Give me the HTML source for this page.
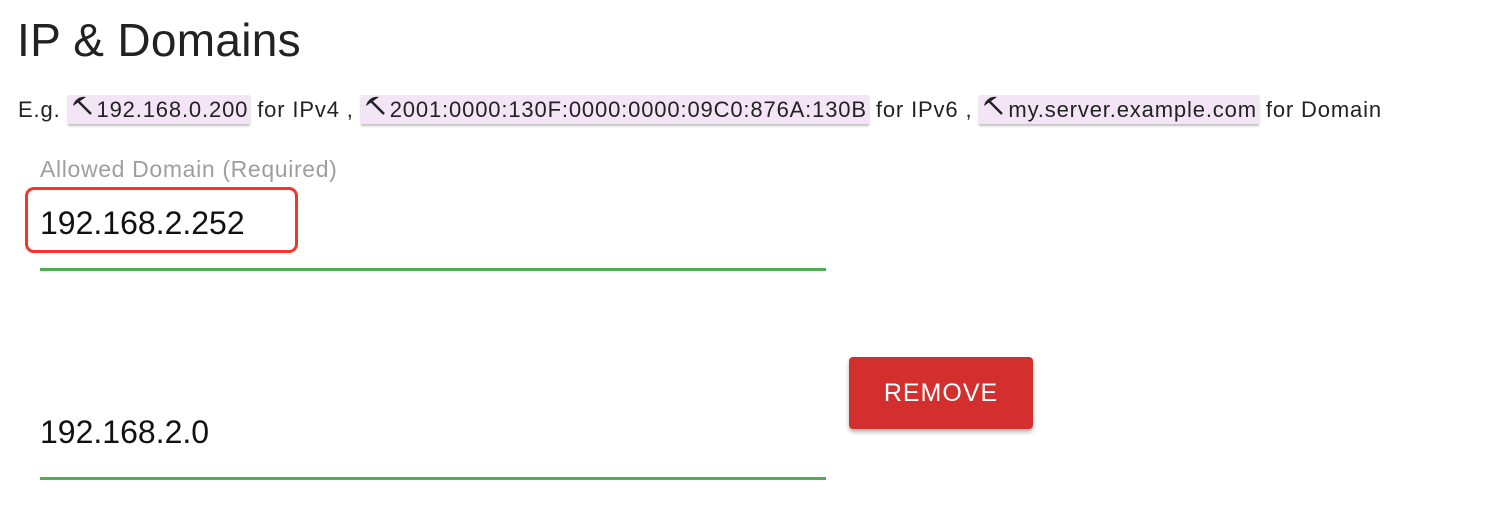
<!DOCTYPE html>
<html><head><style>
body{margin:0;width:1500px;height:528px;background:#fff;font-family:"Liberation Sans",sans-serif;color:#222;position:relative;overflow:hidden}
.a{position:absolute;white-space:nowrap}
.chip{background:#f3e5f5;box-shadow:0 2px 2px rgba(0,0,0,.25);padding:0 2px 0 2px;display:inline-block;line-height:28px}
.ic{display:inline-block;width:27px;height:22px;vertical-align:0px}
</style></head><body>
<div class="a" style="left:17px;top:13px;font-size:46px;color:#222;letter-spacing:0.3px">IP &amp; Domains</div>
<div class="a" style="left:18px;top:95px;font-size:22px;line-height:28px;letter-spacing:0.85px">E.g. <span class="chip"><svg class="ic" viewBox="0 0 27 22"><path d="M3 11 A11 11 0 0 1 16 2 Z" fill="#222"/><path d="M8 6 L21 19" stroke="#222" stroke-width="2.5"/></svg>192.168.0.200</span> for IPv4 , <span class="chip"><svg class="ic" viewBox="0 0 27 22"><path d="M3 11 A11 11 0 0 1 16 2 Z" fill="#222"/><path d="M8 6 L21 19" stroke="#222" stroke-width="2.5"/></svg>2001:0000:130F:0000:0000:09C0:876A:130B</span> for IPv6 , <span class="chip"><svg class="ic" viewBox="0 0 27 22"><path d="M3 11 A11 11 0 0 1 16 2 Z" fill="#222"/><path d="M8 6 L21 19" stroke="#222" stroke-width="2.5"/></svg>my.server.example.com</span> for Domain</div>
<div class="a" style="left:40px;top:156px;font-size:23px;color:#9e9e9e;letter-spacing:0.65px">Allowed Domain (Required)</div>
<div class="a" style="left:25px;top:187px;width:267px;height:60px;border:3px solid #f4352a;border-radius:9px"></div>
<div class="a" style="left:40px;top:205px;font-size:32px;color:#111">192.168.2.252</div>
<div class="a" style="left:40px;top:268px;width:786px;height:3px;background:#4caf50"></div>
<div class="a" style="left:40px;top:414px;font-size:32px;color:#111">192.168.2.0</div>
<div class="a" style="left:40px;top:477px;width:786px;height:3px;background:#4caf50"></div>
<div class="a" style="left:849px;top:357px;width:184px;height:72px;background:#d32f2f;border-radius:4px;box-shadow:0 3px 4px rgba(0,0,0,.3);color:#fff;font-size:25px;letter-spacing:1px;text-align:center;line-height:72px">REMOVE</div>
</body></html>
